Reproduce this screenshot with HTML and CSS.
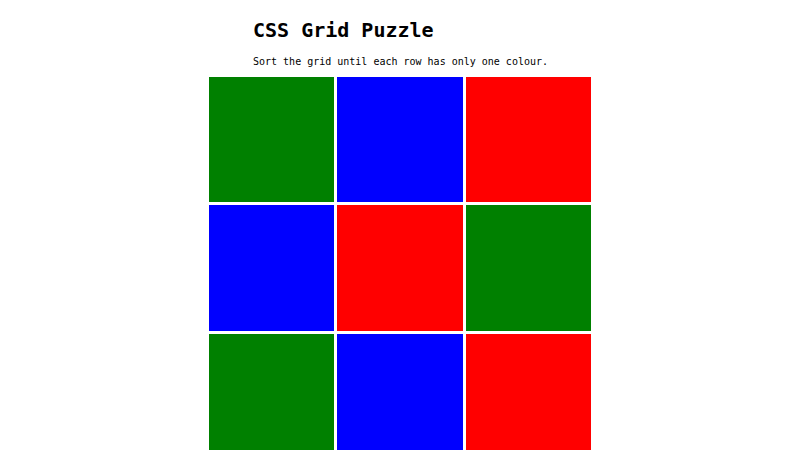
FILE: index.html
```html
<!DOCTYPE html>
<html lang="en">
<head>
<meta charset="utf-8">
<title>CSS Grid Puzzle</title>
<link rel="stylesheet" href="styles.css">
</head>
<body>
  <main class="page">
    <header class="intro">
      <h1 class="title">CSS Grid Puzzle</h1>
      <p class="lead">Sort the grid until each row has only one colour.</p>
    </header>
    <div class="board">
      <div class="tile green"></div>
      <div class="tile blue"></div>
      <div class="tile red"></div>
      <div class="tile blue"></div>
      <div class="tile red"></div>
      <div class="tile green"></div>
      <div class="tile green"></div>
      <div class="tile blue"></div>
      <div class="tile red"></div>
    </div>
  </main>
</body>
</html>
```
FILE: styles.css
```css
body {
  margin: 0;
  background: #fff;
  color: #000;
  font-family: "DejaVu Sans Mono", monospace;
}

.page {
  display: flex;
  flex-direction: column;
  align-items: center;
  padding-top: 18px;
}

.intro {
  width: 294px;
  margin-bottom: 9px;
}

.title {
  margin: 0 0 14px;
  font-size: 20px;
  line-height: 24px;
  font-weight: bold;
}

.lead {
  margin: 0;
  font-size: 10px;
  line-height: 12px;
  white-space: nowrap;
}

.board {
  width: 382px;
  display: grid;
  grid-template-columns: repeat(3, 1fr);
  gap: 3px;
}

.tile {
  aspect-ratio: 1;
}

.green { background: #008000; }
.blue { background: #0000ff; }
.red { background: #ff0000; }
```
